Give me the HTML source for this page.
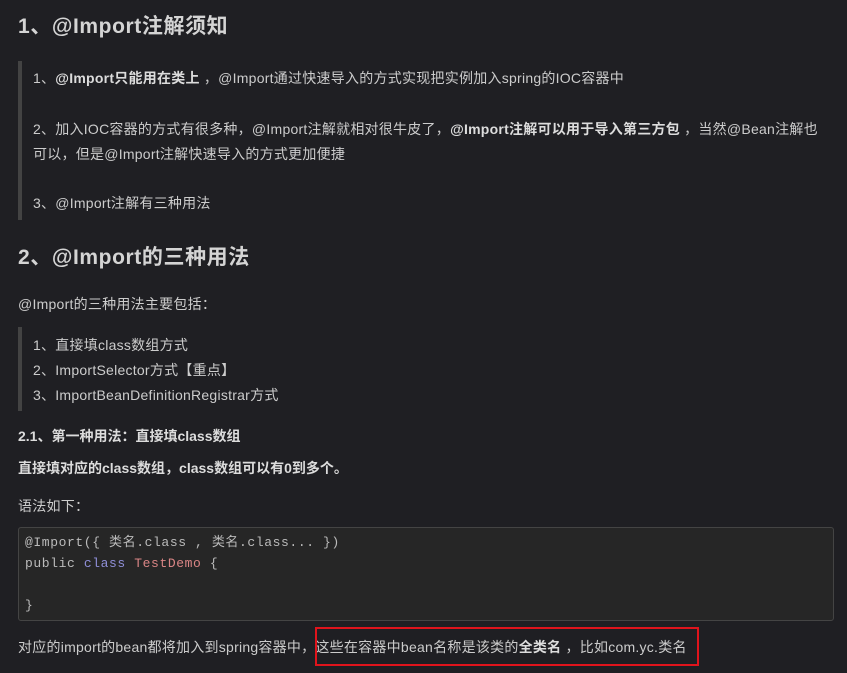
<!DOCTYPE html>
<html><head><meta charset="utf-8"><style>
body{margin:0;background:#1f1f23;width:847px;height:673px;overflow:hidden;position:relative;font-family:"Liberation Sans","Noto Sans CJK SC",sans-serif;color:#cccccc;font-size:14px;letter-spacing:0.25px}
.a{position:absolute;white-space:nowrap;line-height:20px}
h1{position:absolute;margin:0;font-size:21px;font-weight:bold;color:#d4d4d4;white-space:nowrap;line-height:28px;letter-spacing:0.6px}
.bar{position:absolute;left:18px;width:4px;background:#434343}
b{color:#dcdcdc}
.code{position:absolute;left:18px;top:527px;width:816px;height:94px;background:#262626;border:1px solid #444;border-radius:3px;box-sizing:border-box}
.m{position:absolute;left:25px;font-family:"Liberation Mono","Noto Sans CJK SC",monospace;font-size:13px;color:#bbb;white-space:pre;line-height:20px;letter-spacing:0.6px}
</style></head><body>
<h1 style="left:18px;top:13px">1、@Import注解须知</h1>
<div class="bar" style="top:61px;height:159px"></div>
<div class="a" style="left:33px;top:68px">1、<b>@Import只能用在类上</b> ，@Import通过快速导入的方式实现把实例加入spring的IOC容器中</div>
<div class="a" style="left:33px;top:119px">2、加入IOC容器的方式有很多种，@Import注解就相对很牛皮了，<b>@Import注解可以用于导入第三方包</b> ，当然@Bean注解也</div>
<div class="a" style="left:33px;top:144px">可以，但是@Import注解快速导入的方式更加便捷</div>
<div class="a" style="left:33px;top:193px">3、@Import注解有三种用法</div>
<h1 style="left:18px;top:244px">2、@Import的三种用法</h1>
<div class="a" style="left:18px;top:294px">@Import的三种用法主要包括：</div>
<div class="bar" style="top:327px;height:84px"></div>
<div class="a" style="left:33px;top:335px">1、直接填class数组方式</div>
<div class="a" style="left:33px;top:360px">2、ImportSelector方式【重点】</div>
<div class="a" style="left:33px;top:385px">3、ImportBeanDefinitionRegistrar方式</div>
<div class="a" style="left:18px;top:426px;font-size:14px;font-weight:bold;color:#dcdcdc;letter-spacing:0">2.1、第一种用法：直接填class数组</div>
<div class="a" style="left:18px;top:458px;font-size:14px;font-weight:bold;color:#dcdcdc;letter-spacing:0">直接填对应的class数组，class数组可以有0到多个。</div>
<div class="a" style="left:18px;top:496px">语法如下：</div>
<div class="code"></div>
<div class="m" style="top:533px">@Import({ 类名.class , 类名.class... })</div>
<div class="m" style="top:554px">public <span style="color:#8f8fd8">class</span> <span style="color:#d98585">TestDemo</span> {</div>
<div class="m" style="top:596px">}</div>
<div class="a" style="left:18px;top:637px">对应的import的bean都将加入到spring容器中，这些在容器中bean名称是该类的<b>全类名</b> ，比如com.yc.类名</div>
<div style="position:absolute;left:315px;top:627px;width:384px;height:39px;border:2px solid #e0141c;box-sizing:border-box"></div>
</body></html>
